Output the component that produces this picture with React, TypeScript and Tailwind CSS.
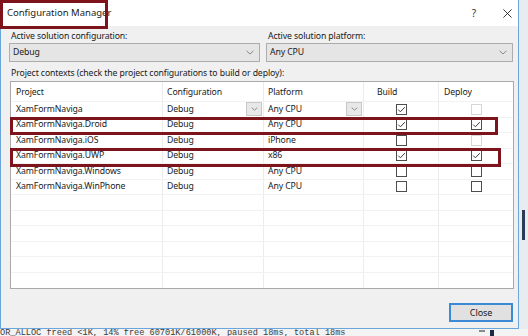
import { useMemo } from 'react';

type DeployState = 'checked' | 'off' | 'disabled';

interface ProjectRow {
  name: string;
  platform: string;
  build: boolean;
  deploy: DeployState;
  editing?: boolean;
}

const projects: ProjectRow[] = [
  { name: 'XamFormNaviga', platform: 'Any CPU', build: true, deploy: 'disabled', editing: true },
  { name: 'XamFormNaviga.Droid', platform: 'Any CPU', build: true, deploy: 'checked' },
  { name: 'XamFormNaviga.iOS', platform: 'iPhone', build: false, deploy: 'disabled' },
  { name: 'XamFormNaviga.UWP', platform: 'x86', build: true, deploy: 'checked' },
  { name: 'XamFormNaviga.Windows', platform: 'Any CPU', build: false, deploy: 'off' },
  { name: 'XamFormNaviga.WinPhone', platform: 'Any CPU', build: false, deploy: 'off' },
];

const cols = 'grid grid-cols-[152px_101px_100px_75px_1fr]';

function Chevron({ className = '' }: { className?: string }) {
  return (
    <svg viewBox="0 0 8 5" className={className} fill="none" stroke="currentColor" strokeWidth={1}>
      <path d="M0.5 0.8 L4 4 L7.5 0.8" />
    </svg>
  );
}

function CheckBox({ state }: { state: DeployState }) {
  const disabled = state === 'disabled';
  return (
    <span
      className={
        'relative block h-[11px] w-[11px] border bg-white ' +
        (disabled ? 'border-[#d6d6d6]' : 'border-[#4d4d4d]')
      }
    >
      {state === 'checked' && (
        <svg viewBox="0 0 11 11" className="absolute -left-px -top-px h-[11px] w-[11px] text-[#3a3a3a]" fill="none" stroke="currentColor" strokeWidth={1}>
          <path d="M2.2 5.6 L4.4 7.8 L8.8 3.2" />
        </svg>
      )}
    </span>
  );
}

function Select({ value }: { value: string }) {
  return (
    <div className="flex h-[19px] items-center justify-between border border-[#adadad] bg-[#e5e5e5] pl-[3px] pr-[5px]">
      <span>{value}</span>
      <Chevron className="h-[5px] w-[8px] text-[#8a8a8a]" />
    </div>
  );
}

function CellDrop() {
  return (
    <span className="flex h-[14px] w-[16px] items-center justify-center border border-[#c8c8c8] bg-[#e8e8e8]">
      <Chevron className="h-[4px] w-[7px] text-[#777]" />
    </span>
  );
}

export default function App() {
  const emptyRows = useMemo(() => Array.from({ length: 6 }, (_, i) => i), []);

  return (
    <div
      className="relative flex h-[336px] w-[528px] flex-col overflow-hidden bg-[#f3f3f3] text-[8.7px] tracking-[-0.1px] text-[#1a1a1a]"
      style={{ fontFamily: '"Noto Sans", "Open Sans", sans-serif' }}
    >
      <div className="flex h-[329px] shrink-0">
        {/* dialog window */}
        <div className="relative flex w-[519px] shrink-0 flex-col border-x border-b border-[#6aa5dc] bg-[#f0f0f0]">
          <div className="flex h-[26px] shrink-0 items-center bg-white pl-[6px]">
            <span className="text-[9.5px] tracking-normal">Configuration Manager</span>
            <span className="ml-auto mr-[27px] text-[10px] text-[#333]">?</span>
            <svg viewBox="0 0 10 10" className="mr-[6px] h-[9px] w-[9px] text-[#222]" stroke="currentColor" strokeWidth={1}>
              <path d="M0.5 0.5 L9.5 9.5 M9.5 0.5 L0.5 9.5" />
            </svg>
          </div>

          <div className="flex flex-1 flex-col pl-[8px] pr-[5px]">
            <div className="mt-[4px] grid grid-cols-[251px_1fr] gap-x-[6px]">
              <div className="flex flex-col">
                <span className="pl-[2px] leading-[13px]">Active solution configuration:</span>
                <Select value="Debug" />
              </div>
              <div className="flex flex-col">
                <span className="pl-[2px] leading-[13px]">Active solution platform:</span>
                <Select value="Any CPU" />
              </div>
            </div>

            <span className="mt-[5px] pl-[2px] leading-[13px]">
              Project contexts (check the project configurations to build or deploy):
            </span>

            <div className="ml-[1px] mt-[1px] w-[504px] border border-[#a9a9a9] bg-white">
              <div className={cols + ' h-[20px] items-center border-b border-[#f2f2f2]'}>
                <span className="border-r border-[#ececec] pl-[5px] leading-[20px]">Project</span>
                <span className="border-r border-[#ececec] pl-[4px] leading-[20px]">Configuration</span>
                <span className="border-r border-[#ececec] pl-[4px] leading-[20px]">Platform</span>
                <span className="border-r border-[#ececec] pl-[13px] leading-[20px]">Build</span>
                <span className="pl-[5px] leading-[20px]">Deploy</span>
              </div>
              {projects.map((p) => (
                <div key={p.name} className={cols + ' h-[15.5px] border-b border-[#f2f2f2]'}>
                  <span className="flex items-center border-r border-[#ececec] pl-[5px]">{p.name}</span>
                  <span className="flex items-center justify-between border-r border-[#ececec] pl-[4px] pr-[1px]">
                    Debug
                    {p.editing && <CellDrop />}
                  </span>
                  <span className="flex items-center justify-between border-r border-[#ececec] pl-[4px] pr-[1px]">
                    {p.platform}
                    {p.editing && <CellDrop />}
                  </span>
                  <span className="flex items-center justify-center border-r border-[#ececec]">
                    <CheckBox state={p.build ? 'checked' : 'off'} />
                  </span>
                  <span className="flex items-center justify-center">
                    <CheckBox state={p.deploy} />
                  </span>
                </div>
              ))}
              {emptyRows.map((i) => (
                <div key={i} className={cols + ' h-[15.5px] border-b border-[#f2f2f2] last:border-b-0'}>
                  <span className="border-r border-[#ececec]" />
                  <span className="border-r border-[#ececec]" />
                  <span className="border-r border-[#ececec]" />
                  <span className="border-r border-[#ececec]" />
                  <span />
                </div>
              ))}
            </div>

            <div className="mt-auto mb-[6px] flex justify-end">
              <button
                type="button"
                className="h-[19px] w-[64px] border-2 border-[#3c8ad6] bg-[#e1e1e1] text-[9px] text-[#1a1a1a]"
              >
                Close
              </button>
            </div>
          </div>

          {/* annotation boxes */}
          <div className="pointer-events-none absolute -left-px top-0 h-[29px] w-[108px] border-[3px] border-[#7d141c]" />
          <div className="pointer-events-none absolute left-[9px] top-[117px] h-[18px] w-[488px] border-[3px] border-[#7d141c]" />
          <div className="pointer-events-none absolute left-[9px] top-[148px] h-[19px] w-[491px] border-[3px] border-[#7d141c]" />
        </div>

        {/* desktop sliver at right */}
        <div className="flex flex-1 flex-col bg-[#e9ecef]">
          <div className="h-[210px]" />
          <div className="ml-[3px] h-[30px] w-[3px] bg-[#2b3a55]" />
        </div>
      </div>

      {/* console behind the dialog */}
      <div className="relative flex h-[7px] items-start overflow-hidden">
        <span
          className="-mt-[1px] whitespace-pre text-[8.6px] leading-[10px] tracking-normal text-[#3b3b3b]"
          style={{ fontFamily: '"Liberation Mono", monospace' }}
        >
          OR_ALLOC freed &lt;1K, 14% free 60701K/61000K, paused 18ms, total 18ms
        </span>
        <span className="ml-auto mr-[34px] mt-[1px] flex items-start gap-[5px]">
          <span className="h-[2px] w-[6px] bg-[#8a8a8a]" />
          <span className="h-[6px] w-[4px] bg-[#1d2a44]" />
        </span>
      </div>
    </div>
  );
}
